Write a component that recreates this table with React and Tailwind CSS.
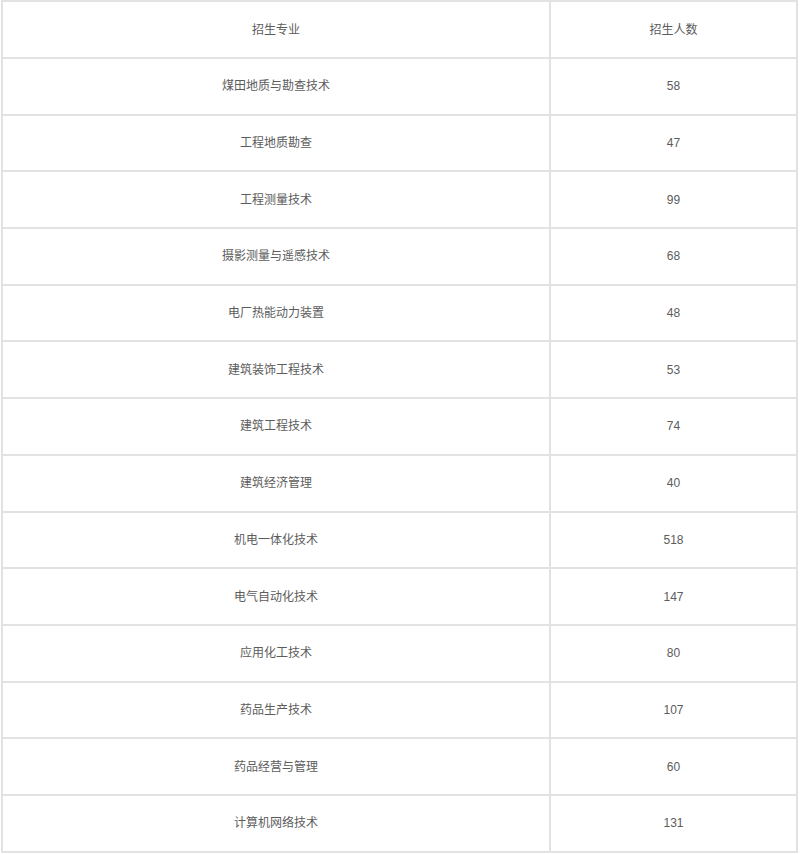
const rows = [
  ['煤田地质与勘查技术', '58'],
  ['工程地质勘查', '47'],
  ['工程测量技术', '99'],
  ['摄影测量与遥感技术', '68'],
  ['电厂热能动力装置', '48'],
  ['建筑装饰工程技术', '53'],
  ['建筑工程技术', '74'],
  ['建筑经济管理', '40'],
  ['机电一体化技术', '518'],
  ['电气自动化技术', '147'],
  ['应用化工技术', '80'],
  ['药品生产技术', '107'],
  ['药品经营与管理', '60'],
  ['计算机网络技术', '131'],
];

export default function App() {
  return (
    <div className="min-h-[854px] bg-white pl-[1px] font-['Liberation_Sans','Noto_Sans_CJK_SC',sans-serif] text-[12px] text-[#5c5c5c]">
      <table className="w-[797px] table-fixed border-collapse">
        <tbody>
          <tr className="h-[57px]">
            <td className="w-[548px] border-2 border-[#e2e2e2] text-center">招生专业</td>
            <td className="border-2 border-[#e2e2e2] text-center">招生人数</td>
          </tr>
          {rows.map(([name, count]) => (
            <tr key={name} className="h-[56.7px]">
              <td className="border-2 border-[#e2e2e2] text-center">{name}</td>
              <td className="border-2 border-[#e2e2e2] text-center">{count}</td>
            </tr>
          ))}
        </tbody>
      </table>
    </div>
  );
}
